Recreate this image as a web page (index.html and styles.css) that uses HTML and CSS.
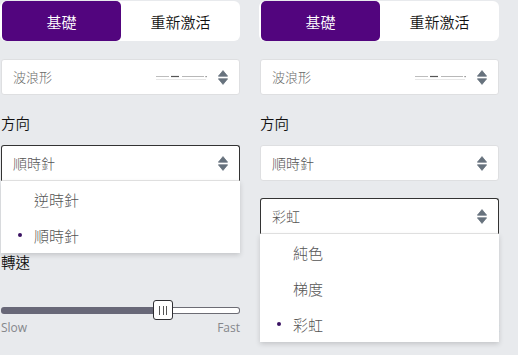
FILE: index.html
```html
<!DOCTYPE html>
<html lang="zh-Hant">
<head>
<meta charset="utf-8">
<title>Settings</title>
<link rel="stylesheet" href="styles.css">
</head>
<body>
<div class="page">
  <section class="panel">
    <div class="seg">
      <div class="seg-btn active">基礎</div>
      <div class="seg-btn">重新激活</div>
    </div>
    <div class="select select-wave">
      <span class="sel-text small">波浪形</span>
      <svg class="wave" width="52" height="8" viewBox="0 0 52 8"><path d="M0 2.5h13" stroke="#bdbdbd" stroke-width="1"/><path d="M15 2.5h8" stroke="#555" stroke-width="1.2"/><path d="M26 2.5h22" stroke="#b8b8b8" stroke-width="1"/><rect x="49.5" y="2" width="1.2" height="1.2" fill="#777"/><path d="M0 5.5h50" stroke="#e8e8e8" stroke-width="1"/></svg>
      <svg class="sort" width="10" height="15" viewBox="0 0 10 15"><path d="M5 0.6L9.6 6.2H0.4Z" fill="#67727d" stroke="#67727d" stroke-width="0.8" stroke-linejoin="round"/><path d="M5 14.4L9.6 8.8H0.4Z" fill="#67727d" stroke="#67727d" stroke-width="0.8" stroke-linejoin="round"/></svg>
    </div>
    <div class="label">方向</div>
    <div class="select-wrap">
      <div class="select open">
        <span class="sel-text">順時針</span>
        <svg class="sort" width="10" height="15" viewBox="0 0 10 15"><path d="M5 0.6L9.6 6.2H0.4Z" fill="#67727d" stroke="#67727d" stroke-width="0.8" stroke-linejoin="round"/><path d="M5 14.4L9.6 8.8H0.4Z" fill="#67727d" stroke="#67727d" stroke-width="0.8" stroke-linejoin="round"/></svg>
      </div>
      <ul class="menu">
        <li class="item"><span class="dot"></span>逆時針</li>
        <li class="item selected"><span class="dot"></span>順時針</li>
      </ul>
    </div>
    <div class="select gap">
      <span class="sel-text">彩虹</span>
      <svg class="sort" width="10" height="15" viewBox="0 0 10 15"><path d="M5 0.6L9.6 6.2H0.4Z" fill="#67727d" stroke="#67727d" stroke-width="0.8" stroke-linejoin="round"/><path d="M5 14.4L9.6 8.8H0.4Z" fill="#67727d" stroke="#67727d" stroke-width="0.8" stroke-linejoin="round"/></svg>
    </div>
    <div class="label">轉速</div>
    <div class="slider">
      <div class="track-fill"></div>
      <div class="thumb"><i></i><i></i><i></i></div>
      <div class="track-rest"></div>
    </div>
    <div class="range-labels"><span>Slow</span><span>Fast</span></div>
  </section>

  <section class="panel">
    <div class="seg">
      <div class="seg-btn active">基礎</div>
      <div class="seg-btn">重新激活</div>
    </div>
    <div class="select select-wave">
      <span class="sel-text small">波浪形</span>
      <svg class="wave" width="52" height="8" viewBox="0 0 52 8"><path d="M0 2.5h13" stroke="#bdbdbd" stroke-width="1"/><path d="M15 2.5h8" stroke="#555" stroke-width="1.2"/><path d="M26 2.5h22" stroke="#b8b8b8" stroke-width="1"/><rect x="49.5" y="2" width="1.2" height="1.2" fill="#777"/><path d="M0 5.5h50" stroke="#e8e8e8" stroke-width="1"/></svg>
      <svg class="sort" width="10" height="15" viewBox="0 0 10 15"><path d="M5 0.6L9.6 6.2H0.4Z" fill="#67727d" stroke="#67727d" stroke-width="0.8" stroke-linejoin="round"/><path d="M5 14.4L9.6 8.8H0.4Z" fill="#67727d" stroke="#67727d" stroke-width="0.8" stroke-linejoin="round"/></svg>
    </div>
    <div class="label">方向</div>
    <div class="select">
      <span class="sel-text">順時針</span>
      <svg class="sort" width="10" height="15" viewBox="0 0 10 15"><path d="M5 0.6L9.6 6.2H0.4Z" fill="#67727d" stroke="#67727d" stroke-width="0.8" stroke-linejoin="round"/><path d="M5 14.4L9.6 8.8H0.4Z" fill="#67727d" stroke="#67727d" stroke-width="0.8" stroke-linejoin="round"/></svg>
    </div>
    <div class="select-wrap gap">
      <div class="select open">
        <span class="sel-text">彩虹</span>
        <svg class="sort" width="10" height="15" viewBox="0 0 10 15"><path d="M5 0.6L9.6 6.2H0.4Z" fill="#67727d" stroke="#67727d" stroke-width="0.8" stroke-linejoin="round"/><path d="M5 14.4L9.6 8.8H0.4Z" fill="#67727d" stroke="#67727d" stroke-width="0.8" stroke-linejoin="round"/></svg>
      </div>
      <ul class="menu">
        <li class="item"><span class="dot"></span>純色</li>
        <li class="item"><span class="dot"></span>梯度</li>
        <li class="item selected"><span class="dot"></span>彩虹</li>
      </ul>
    </div>
    <div class="label">轉速</div>
    <div class="slider">
      <div class="track-fill"></div>
      <div class="thumb"><i></i><i></i><i></i></div>
      <div class="track-rest"></div>
    </div>
    <div class="range-labels"><span>Slow</span><span>Fast</span></div>
  </section>

  <div class="edge"></div>
</div>
</body>
</html>
```
FILE: styles.css
```css
html, body {
  margin: 0;
  padding: 0;
  height: 100%;
  background: #e8eaed;
}
body {
  font-family: "Noto Sans CJK TC", "Noto Sans", sans-serif;
  font-weight: 300;
  color: #222;
  overflow: hidden;
}
.page {
  display: flex;
  gap: 20px;
  padding: 1px 0 0 1px;
  height: 100%;
  box-sizing: border-box;
}
.panel {
  width: 239px;
  display: flex;
  flex-direction: column;
  flex: none;
}
.seg {
  display: flex;
  background: #fff;
  border-radius: 6px;
  height: 40px;
  margin-left: -1px;
  padding-left: 2px;
  width: 238px;
}
.seg-btn {
  flex: 1;
  display: flex;
  align-items: center;
  justify-content: center;
  font-size: 15px;
  font-weight: 350;
  color: #111;
  border-radius: 5px;
}
.seg-btn.active {
  background: #52057e;
  color: #fff;
}
.select {
  height: 36px;
  box-sizing: border-box;
  background: #fff;
  border: 1px solid #dedfe1;
  border-radius: 3px;
  display: flex;
  align-items: center;
  padding: 0 11px 0 11px;
}
.select-wave {
  margin-top: 18px;
}
.select.open {
  border-color: #333;
  border-bottom-color: #e6e6e6;
  border-radius: 3px 3px 0 0;
}
.sel-text {
  flex: 1;
  font-size: 14px;
  color: #555;
  line-height: 20px;
}
.sel-text.small {
  font-size: 13px;
  color: #6a6a6a;
}
.wave {
  display: block;
  margin-right: 10px;
  margin-top: 1px;
}
.sort {
  display: block;
  flex: none;
}
.label {
  margin-top: 18px;
  margin-bottom: 12px;
  height: 20px;
  line-height: 20px;
  font-size: 14.5px;
  font-weight: 350;
  color: #111;
}
.select-wrap {
  position: relative;
  z-index: 2;
}
.gap {
  margin-top: 17px;
}
.menu {
  position: absolute;
  top: 36px;
  left: 0;
  right: 0;
  margin: 0;
  padding: 0;
  list-style: none;
  background: #fff;
  box-shadow: 0 2px 5px rgba(0, 0, 0, 0.16);
}
.item {
  height: 36px;
  display: flex;
  align-items: center;
  padding-left: 17px;
  font-size: 15px;
  color: #555;
}
.dot {
  width: 4px;
  height: 4px;
  border-radius: 50%;
  background: #3a1263;
  margin-right: 12px;
  visibility: hidden;
}
.item.selected .dot {
  visibility: visible;
}
.slider {
  margin-top: 16px;
  height: 20px;
  display: flex;
  align-items: center;
}
.track-fill {
  width: 153px;
  height: 7px;
  background: #686878;
  border-radius: 3px 0 0 3px;
  margin-right: -1px;
}
.thumb {
  width: 20px;
  height: 20px;
  box-sizing: border-box;
  border: 1px solid #2f2f33;
  border-radius: 3px;
  background: #fff;
  display: flex;
  align-items: center;
  justify-content: center;
  gap: 2.5px;
  position: relative;
  z-index: 1;
}
.thumb i {
  display: block;
  width: 1px;
  height: 9px;
  background: #555;
}
.track-rest {
  flex: 1;
  height: 7px;
  box-sizing: border-box;
  background: #fff;
  border: 1px solid #6c6c74;
  border-left: none;
  border-radius: 0 3px 3px 0;
  margin-left: -1px;
}
.range-labels {
  display: flex;
  justify-content: space-between;
  font-family: "Open Sans", "Noto Sans", sans-serif;
  font-weight: 400;
  font-size: 12px;
  line-height: 16px;
  color: #85878b;
}
.edge {
  margin-left: auto;
  width: 2px;
  margin-right: 2px;
  background: #e1e3e6;
  flex: none;
}
```
